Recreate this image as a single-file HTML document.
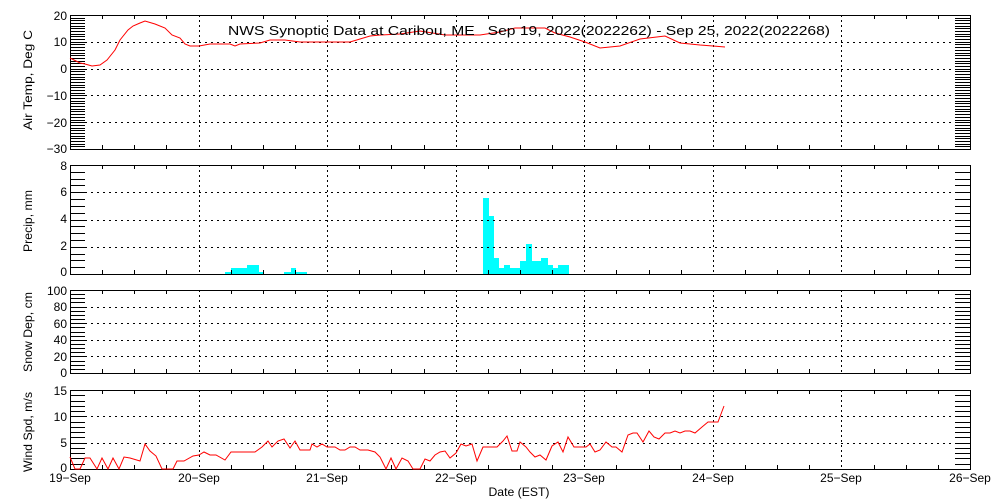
<!DOCTYPE html>
<html><head><meta charset="utf-8"><style>
html,body{margin:0;padding:0;background:#fff;width:1000px;height:500px;overflow:hidden}
svg{display:block}
text{font-family:"Liberation Sans",sans-serif;font-size:12px;fill:#000}
</style></head><body>
<svg id="s" width="1000" height="500" xmlns="http://www.w3.org/2000/svg">
<g id="g" shape-rendering="crispEdges"></g>
<text x="228" y="35" textLength="602" lengthAdjust="spacingAndGlyphs" style="font-size:13px;white-space:pre" xml:space="preserve">NWS Synoptic Data at Caribou, ME   Sep 19, 2022(2022262) - Sep 25, 2022(2022268)</text>
<g text-anchor="end">
<text x="67" y="20">20</text><text x="67" y="46">10</text><text x="67" y="73">0</text><text x="67" y="100">−10</text><text x="67" y="127">−20</text><text x="67" y="153">−30</text>
<text x="67" y="170">8</text><text x="67" y="196">6</text><text x="67" y="223">4</text><text x="67" y="250">2</text><text x="67" y="276">0</text>
<text x="67" y="295">100</text><text x="67" y="311">80</text><text x="67" y="328">60</text><text x="67" y="344">40</text><text x="67" y="361">20</text><text x="67" y="377">0</text>
<text x="67" y="395">15</text><text x="67" y="421">10</text><text x="67" y="447">5</text><text x="67" y="472">0</text>
</g>
<g text-anchor="middle">
<text x="32" y="80" transform="rotate(-90 32 80)" textLength="100" lengthAdjust="spacingAndGlyphs">Air Temp, Deg C</text>
<text x="32" y="221" transform="rotate(-90 32 221)" textLength="62" lengthAdjust="spacingAndGlyphs">Precip, mm</text>
<text x="32" y="332" transform="rotate(-90 32 332)" textLength="80" lengthAdjust="spacingAndGlyphs">Snow Dep, cm</text>
<text x="32" y="432" transform="rotate(-90 32 432)" textLength="80" lengthAdjust="spacingAndGlyphs">Wind Spd, m/s</text>
<text x="70" y="482">19−Sep</text><text x="199" y="482">20−Sep</text><text x="327" y="482">21−Sep</text><text x="456" y="482">22−Sep</text><text x="584" y="482">23−Sep</text><text x="713" y="482">24−Sep</text><text x="841" y="482">25−Sep</text><text x="970" y="482">26−Sep</text>
<text x="519" y="496" textLength="61" lengthAdjust="spacingAndGlyphs">Date (EST)</text>
</g>
</svg>
<script>
var g=document.getElementById('g'),h='';
function L(x1,y1,x2,y2,ex){h+='<line x1="'+x1+'" y1="'+y1+'" x2="'+x2+'" y2="'+y2+'" stroke="#000" '+(ex||'')+'/>';}
var P=[[15,149,20,-30,1,10],[165,274,8,0,0.5,2],[290,373,100,0,5,20],[390,469,15,0,1,5]];
P.forEach(function(p){
 var t=p[0],b=p[1],hi=p[2],lo=p[3];
 function Y(v){return t+(hi-v)/(hi-lo)*(b-t);}
 for(var v=lo;v<=hi+1e-6;v+=p[4]){var y=Math.round(Y(v))+0.5;L(70,y,85,y);L(955,y,970,y);}
 for(var v=lo+p[5];v<hi-1e-6;v+=p[5]){var y=Math.round(Y(v))+0.5;L(85,y,955,y,'stroke-dasharray="2,4"');}
 for(var d=1;d<7;d++){var x=Math.round(70+d*128.57)+0.5;L(x,t,x,b,'stroke-dasharray="2,3"');}
 for(var q=1;q<28;q++){if(q%4==0)continue;var x=Math.round(70+q*32.14)+0.5;L(x,t,x,t+4);L(x,b-4,x,b);}
 h+='<rect x="70.5" y="'+(t+.5)+'" width="900" height="'+(b-t)+'" fill="none" stroke="#000"/>';
});
var bars=[[225,231,272],[231,247,268],[247,259,265],[259,263,272],[284,291,272],[291,296,268],[296,307,272],[483,489,198],[489,494,216],[494,499,258],[499,504,268],[504,510,265],[510,520,268],[520,526,261],[526,532,244],[532,541,261],[541,548,258],[548,553,265],[553,558,268],[558,569,265]];
var bh='';bars.forEach(function(r){bh+='<rect x="'+r[0]+'" y="'+r[2]+'" width="'+(r[1]-r[0])+'" height="'+(274-r[2])+'" fill="#00ffff"/>';});
var temp="70,58 80,63 85,64 92,66 100,65 107,60 115,50 120,40 128,30 133,26 140,23 145,21 155,24 165,28 172,35 180,38 185,44 190,46 199,46 210,44 230,44 235,46 240,44 260,43 270,40 285,40 300,42 327,42 350,42 370,36 380,35 400,34 420,31 445,35 480,35 500,32 515,28 545,28 555,33 570,37 585,42 600,48 620,46 640,39 665,36 680,43 700,45 713,46 725,47";
var wind="70,457 75,469 80,469 85,458 90,458 97,469 102,458 108,469 113,458 119,469 124,457 130,458 140,461 145,444 150,451 156,456 162,469 173,469 177,461 184,461 193,456 199,455 204,452 210,455 216,455 225,460 231,452 245,452 255,452 262,447 268,441 272,447 278,441 284,439 290,448 295,441 300,450 310,450 312,444 317,447 322,444 327,447 335,447 340,450 345,450 350,447 355,447 360,450 368,450 375,452 380,457 386,469 391,458 396,469 402,458 408,461 413,469 420,469 425,459 430,461 435,455 440,452 445,451 450,458 456,453 461,444 466,446 472,444 477,461 483,447 490,447 497,447 503,441 507,436 512,451 517,451 520,442 526,447 530,452 535,457 540,455 546,460 552,446 558,442 563,452 568,437 574,447 580,447 586,447 590,444 595,452 600,450 606,442 612,447 616,447 622,452 628,435 633,433 637,433 643,442 649,431 654,437 659,439 665,433 670,433 675,431 680,433 685,431 690,431 695,433 702,427 708,422 718,422 724,406";
g.innerHTML=bh+h+'<polyline points="'+temp+'" fill="none" stroke="#f00" shape-rendering="auto"/><polyline points="'+wind+'" fill="none" stroke="#f00" shape-rendering="auto"/>';
</script>
</body></html>
